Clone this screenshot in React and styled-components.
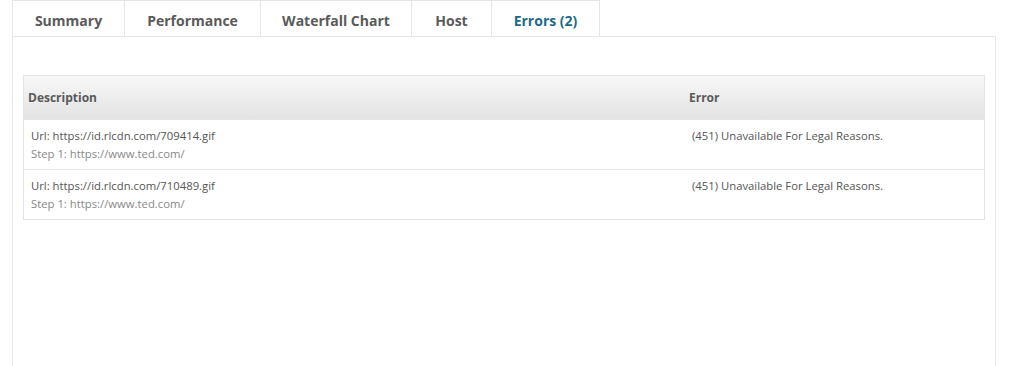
import styled, { createGlobalStyle } from 'styled-components'

const GlobalStyle = createGlobalStyle`
  body {
    margin: 0;
    background: #fff;
    font-family: 'Open Sans', 'Liberation Sans', sans-serif;
  }
`

const Page = styled.div`
  padding: 0 28px 0 12px;
  height: 366px;
  display: flex;
  flex-direction: column;
  box-sizing: border-box;
`

const TabBar = styled.nav`
  display: flex;
`

const Tab = styled.div`
  width: ${props => props.width}px;
  height: 36px;
  box-sizing: border-box;
  display: flex;
  align-items: center;
  justify-content: center;
  border: 1px solid #e6e6e6;
  border-bottom: none;
  margin-left: -1px;
  &:first-child {
    margin-left: 0;
  }
  font-size: 14px;
  font-weight: 700;
  color: ${props => (props.active ? '#1d6a87' : '#5a5a5a')};
  padding-top: 3px;
`

const Panel = styled.section`
  flex: 1;
  border: 1px solid #e6e6e6;
  border-bottom: none;
  padding: 38px 10px 0 10px;
`

const Table = styled.div`
  border: 1px solid #e3e3e3;
`

const Row = styled.div`
  display: grid;
  grid-template-columns: 661px 1fr;
  border-top: ${props => (props.head ? 'none' : '1px solid #e6e6e6')};
`

const HeadRow = styled(Row)`
  height: 43px;
  align-items: center;
  background: linear-gradient(#f7f7f7, #e3e3e3);
`

const HeadCell = styled.div`
  padding-left: 4px;
  font-size: 12px;
  font-weight: 700;
  color: #5a5a5a;
`

const Cell = styled.div`
  height: 49px;
  box-sizing: border-box;
  padding: 7px 0 0 7px;
  font-size: 11.3px;
  line-height: 18px;
  color: #555;
`

const SubLine = styled.div`
  color: #888;
`

const tabs = [
  { label: 'Summary', width: 113 },
  { label: 'Performance', width: 137 },
  { label: 'Waterfall Chart', width: 152 },
  { label: 'Host', width: 81 },
  { label: 'Errors (2)', width: 109, active: true }
]

const errors = [
  { url: 'https://id.rlcdn.com/709414.gif', step: 'https://www.ted.com/', error: '(451) Unavailable For Legal Reasons.' },
  { url: 'https://id.rlcdn.com/710489.gif', step: 'https://www.ted.com/', error: '(451) Unavailable For Legal Reasons.' }
]

const App = () => (
  <>
    <GlobalStyle />
    <Page>
      <TabBar>
        {tabs.map(t => (
          <Tab key={t.label} width={t.width} active={t.active}>{t.label}</Tab>
        ))}
      </TabBar>
      <Panel>
        <Table>
          <HeadRow head>
            <HeadCell>Description</HeadCell>
            <HeadCell>Error</HeadCell>
          </HeadRow>
          {errors.map(e => (
            <Row key={e.url}>
              <Cell>
                <div>Url: {e.url}</div>
                <SubLine>Step 1: {e.step}</SubLine>
              </Cell>
              <Cell>{e.error}</Cell>
            </Row>
          ))}
        </Table>
      </Panel>
    </Page>
  </>
)

export default App
